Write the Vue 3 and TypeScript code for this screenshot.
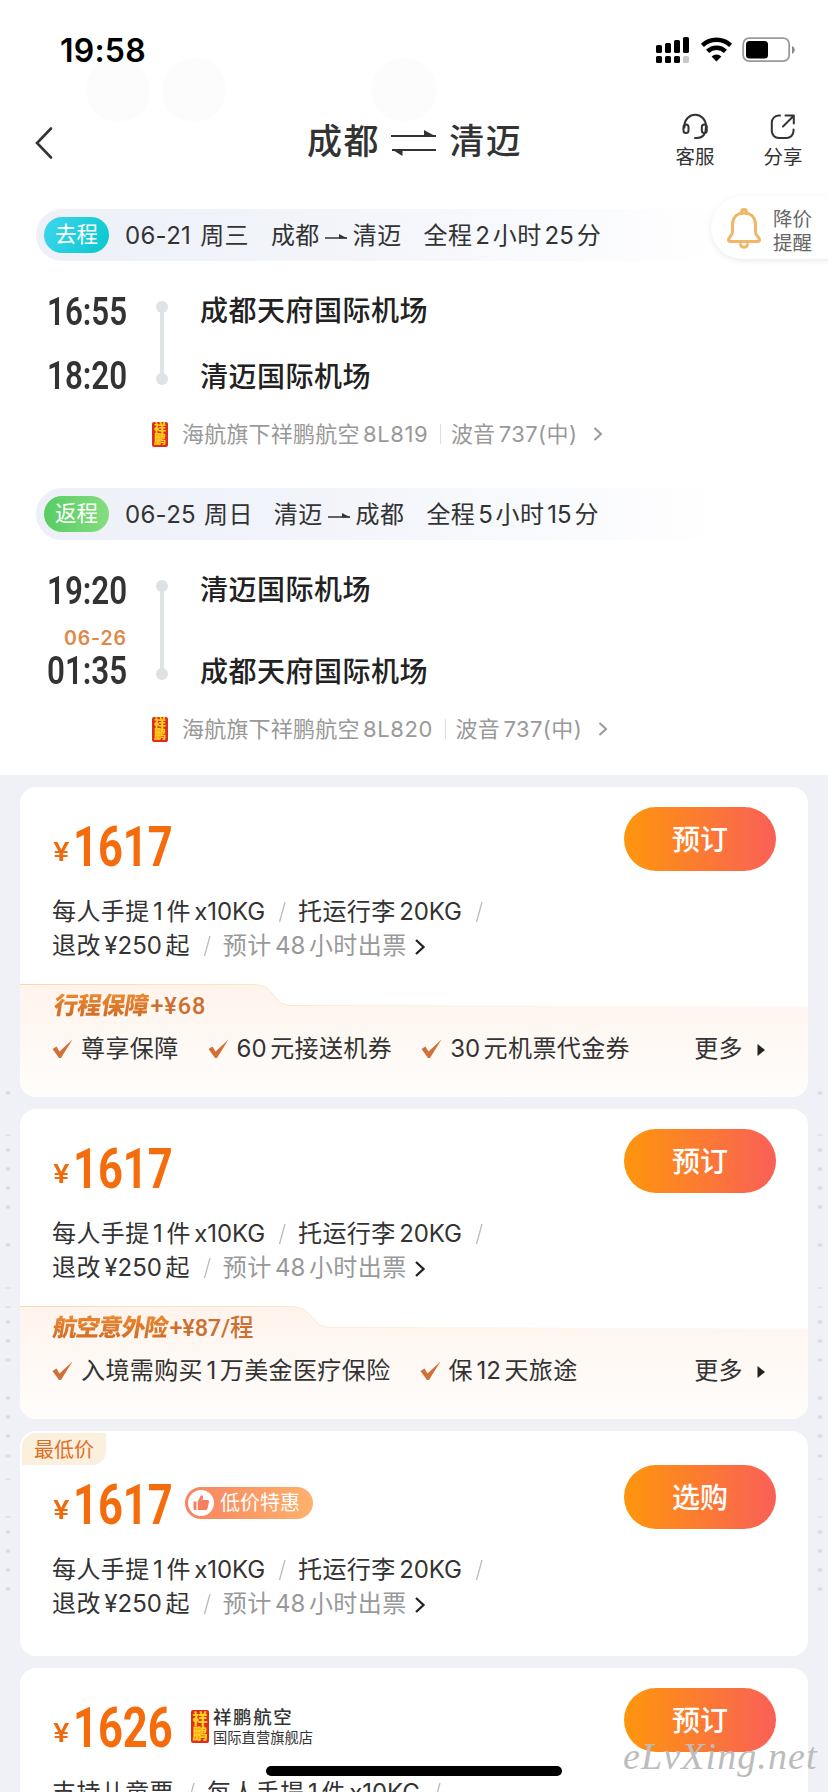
<script setup lang="ts">
interface Leg {
  kind: string
  tone: string
  date: string
  day: string
  from: string
  to: string
  duration: string
  depart: string
  arrive: string
  nextDay?: string
  fromAirport: string
  toAirport: string
  flight: string
}
interface Bundle {
  title: string
  tone: string
  extra: string
  shape: string
  edge: string
  perks: string[]
}
interface Offer {
  id: number
  price: string
  action: string
  first: string[]
  second?: string[]
  lowest?: boolean
  store?: boolean
  bundle?: Bundle
}

const legs: Leg[] = [
  { kind: '去程', tone: 'outbound', date: '06-21', day: '周三', from: '成都', to: '清迈', duration: '全程2小时25分', depart: '16:55', arrive: '18:20', fromAirport: '成都天府国际机场', toAirport: '清迈国际机场', flight: '8L819' },
  { kind: '返程', tone: 'inbound', date: '06-25', day: '周日', from: '清迈', to: '成都', duration: '全程5小时15分', depart: '19:20', arrive: '01:35', nextDay: '06-26', fromAirport: '清迈国际机场', toAirport: '成都天府国际机场', flight: '8L820' },
]

const baggage = ['每人手提1件x10KG', '托运行李20KG']
const offers: Offer[] = [
  {
    id: 1, price: '1617', action: '预订', first: baggage, second: ['退改¥250起', '预计48小时出票'],
    bundle: {
      title: '行程保障', tone: 'trip', extra: '+¥68',
      shape: 'M0 .5H232C258 .5 250 21.5 272 21.5L788 22.5V113H0Z',
      edge: 'M0 .5H232C258 .5 250 21.5 272 21.5L788 22.5',
      perks: ['尊享保障', '60元接送机券', '30元机票代金券'],
    },
  },
  {
    id: 2, price: '1617', action: '预订', first: baggage, second: ['退改¥250起', '预计48小时出票'],
    bundle: {
      title: '航空意外险', tone: 'accident', extra: '+¥87/程',
      shape: 'M0 .5H270C296 .5 288 21.5 312 21.5L788 22.5V113H0Z',
      edge: 'M0 .5H270C296 .5 288 21.5 312 21.5L788 22.5',
      perks: ['入境需购买1万美金医疗保险', '保12天旅途'],
    },
  },
  { id: 3, price: '1617', action: '选购', first: baggage, second: ['退改¥250起', '预计48小时出票'], lowest: true },
  { id: 4, price: '1626', action: '预订', first: ['支持儿童票', '每人手提1件x10KG'], store: true },
]

/** Splits a label into Chinese and Latin runs so the Latin ones can be spaced and sized apart. */
function runs(text: string): { t: string; latin: boolean }[] {
  return (text.match(/[\u4e00-\u9fff]+|[^\u4e00-\u9fff]+/g) ?? []).map((t) => ({ t, latin: !/[\u4e00-\u9fff]/.test(t) }))
}

const specks: { y: number; dash?: boolean }[] = [
  { y: 1093 }, { y: 1135, dash: true }, { y: 1150 }, { y: 1169 }, { y: 1188 }, { y: 1207 }, { y: 1245 },
  { y: 1288, dash: true }, { y: 1307, dash: true }, { y: 1322 }, { y: 1341 }, { y: 1360 }, { y: 1398 },
  { y: 1417 }, { y: 1436 }, { y: 1456 }, { y: 1479, dash: true }, { y: 1517, dash: true },
  { y: 1532 }, { y: 1551 }, { y: 1570 }, { y: 1589 },
]
</script>

<template>
  <div class="screen">
    <div class="bubbles"><i class="b1"></i><i class="b2"></i><i class="b3"></i></div>

    <header class="status">
      <span class="clock">19:58</span>
      <svg class="status-icons" width="140" height="27" viewBox="0 0 140 27">
        <g fill="#000">
          <rect x="0" y="8" width="6" height="8" rx="1.6" /><rect x="9" y="6" width="6" height="10" rx="1.6" />
          <rect x="18" y="3" width="6" height="13" rx="1.6" /><rect x="27" y="0" width="6" height="16" rx="1.6" />
          <rect x="0" y="19" width="6" height="7" rx="1.6" /><rect x="9" y="19" width="6" height="7" rx="1.6" />
          <rect x="18" y="19" width="6" height="7" rx="1.6" /><rect x="27" y="19" width="6" height="7" rx="1.6" fill="#c8c8c8" />
        </g>
        <g fill="none" stroke="#000" stroke-width="4.4">
          <path d="M46.4 8.3A20.5 20.5 0 0 1 74.6 8.3" /><path d="M51.6 14.4A12.6 12.6 0 0 1 69.4 14.4" />
        </g>
        <path d="M55.6 19.4a7 7 0 0 1 9.8 0L60.5 24.4Z" fill="#000" />
        <rect x="87.2" y="1.2" width="46" height="23" rx="6" fill="none" stroke="#999" stroke-width="1.8" />
        <rect x="90" y="4" width="22" height="17.5" rx="3.5" fill="#000" />
        <path d="M136 9c3.6 1.2 3.6 6.6 0 7.8Z" fill="#888" />
      </svg>
    </header>

    <nav class="nav">
      <svg class="chevron-back" width="20" height="36" viewBox="0 0 20 36"><path d="M17 3.500L3 18L17 32.500" fill="none" stroke="#333" stroke-width="2.600" stroke-linecap="round" /></svg>
      <h1 class="route">
        <span>成都</span>
        <svg width="48" height="28" viewBox="0 0 48 28"><g fill="none" stroke="#333" stroke-width="2.200"><path d="M1 8H46" /><path d="M2 22H46" /></g><path d="M34 2L46 8.500H34Z M2 21.500H12.500V28Z" fill="#333" /></svg>
        <span>清迈</span>
      </h1>
      <div class="tools">
        <div class="tool">
          <svg width="28" height="28" viewBox="0 0 28 28" fill="none" stroke="#333" stroke-width="2" stroke-linecap="round"><path d="M3.500 14.500V12.500a10.700 10.700 0 0 1 21.400 0V14.500C25 21 22 25 16 25H14" /><rect x="2.500" y="11.500" width="5" height="8.500" rx="2.500" /><rect x="20.800" y="11.500" width="5" height="8.500" rx="2.500" /></svg>
          <span>客服</span>
        </div>
        <div class="tool">
          <svg width="28" height="28" viewBox="0 0 28 28" fill="none" stroke="#333" stroke-width="2" stroke-linecap="round" stroke-linejoin="round"><path d="M11 2.500H9.500A7 7 0 0 0 2.800 9.500V18A7 7 0 0 0 9.800 25H17.500A7 7 0 0 0 24.500 18V16.500" /><path d="M14 13.500L24.500 3M16.500 2.500H24.800V10.500" /></svg>
          <span>分享</span>
        </div>
      </div>
    </nav>

    <aside class="alert">
      <svg width="36" height="42" viewBox="0 0 36 42" fill="none" stroke="#f0b767" stroke-width="3" stroke-linejoin="round" stroke-linecap="round"><path d="M18 5C10.500 5 6.500 10 6.500 16.500V24C6.500 28 2.500 29 2.500 32C2.500 33 3.500 33.500 4.500 33.500H31.500C32.500 33.500 33.500 33 33.500 32C33.500 29 29.500 28 29.500 24V16.500C29.500 10 25.500 5 18 5Z" /><path d="M15.500 5.500V4a2.500 2.500 0 0 1 5 0v1.500" /><path d="M14.500 36.500a3.600 3.600 0 0 0 7 0" /></svg>
      <div class="alert-text"><span>降价</span><span>提醒</span></div>
    </aside>

    <section v-for="leg in legs" :key="leg.kind" class="leg" :class="leg.tone">
      <div class="bar">
        <span class="tag">{{ leg.kind }}</span>
        <span class="date">{{ leg.date }}</span>
        <span class="day">{{ leg.day }}</span>
        <span>{{ leg.from }}</span>
        <svg class="to" width="24" height="12" viewBox="0 0 24 12"><path d="M1 8H23" stroke="#333" stroke-width="1.500" /><path d="M15 4L23.500 8.500H15Z" fill="#333" /></svg>
        <span>{{ leg.to }}</span>
        <span class="duration"><span v-for="(r, i) in runs(leg.duration)" :key="i" :class="{ lat: r.latin }">{{ r.t }}</span></span>
      </div>
      <div class="stops">
        <div class="times">
          <span class="time"><b>{{ leg.depart }}</b></span>
          <span v-if="leg.nextDay" class="next">{{ leg.nextDay }}</span>
          <span class="time"><b>{{ leg.arrive }}</b></span>
        </div>
        <div class="track"></div>
        <div class="airports"><span>{{ leg.fromAirport }}</span><span>{{ leg.toAirport }}</span></div>
      </div>
      <div class="carrier">
        <span class="seal"><i>祥</i><i>鹏</i></span>
        <span class="airline">海航旗下祥鹏航空</span>
        <span class="lat no">{{ leg.flight }}</span>
        <i class="split"></i>
        <span>波音</span><span class="lat plane">737(中)</span>
        <svg width="10" height="16" viewBox="0 0 10 16"><path d="M1.500 2L8 8L1.500 14" fill="none" stroke="#999" stroke-width="2" /></svg>
      </div>
    </section>

    <main class="offers">
      <article v-for="o in offers" :key="o.id" class="card" :class="{ lowest: o.lowest }">
        <span v-if="o.lowest" class="corner">最低价</span>
        <div class="head">
          <span class="yen">¥</span>
          <span class="price"><b>{{ o.price }}</b></span>
          <span v-if="o.lowest" class="deal">
            <svg width="26" height="26" viewBox="0 0 26 26"><circle cx="13" cy="13" r="13" fill="#fff" /><path d="M5.500 11.500H8.500V20H7Q5.500 20 5.500 18.500Z M9.800 11.500L12.500 6Q13 5 14.200 5.500Q15.500 6.200 15 8L14.500 10H19.500Q21.500 10.200 21 12L19.500 18.500Q19 20 17.500 20H9.800Z" fill="#f77e5e" /></svg>
            低价特惠
          </span>
          <span v-if="o.store" class="store">
            <span class="seal big"><i>祥</i><i>鹏</i></span>
            <span class="store-name"><em>祥鹏航空</em><small>国际直营旗舰店</small></span>
          </span>
          <button class="action">{{ o.action }}</button>
        </div>
        <div class="terms">
          <p>
            <template v-for="(part, i) in o.first" :key="i">
              <span><span v-for="(r, k) in runs(part)" :key="k" :class="{ lat: r.latin }">{{ r.t }}</span></span>
              <svg class="slash" width="8" height="22" viewBox="0 0 8 22"><path d="M7 1L1.500 21" stroke="#bbb" stroke-width="1.300" /></svg>
            </template>
          </p>
          <p v-if="o.second">
            <span><span v-for="(r, k) in runs(o.second[0])" :key="k" :class="{ lat: r.latin }">{{ r.t }}</span></span>
            <svg class="slash" width="8" height="22" viewBox="0 0 8 22"><path d="M7 1L1.500 21" stroke="#bbb" stroke-width="1.300" /></svg>
            <span class="muted"><span v-for="(r, k) in runs(o.second[1])" :key="k" :class="{ lat: r.latin }">{{ r.t }}</span></span>
            <svg class="more-arrow" width="12" height="18" viewBox="0 0 12 18"><path d="M2 2L9.500 9L2 16" fill="none" stroke="#222" stroke-width="2.300" /></svg>
          </p>
        </div>
        <div v-if="o.bundle" class="bundle" :class="o.bundle.tone">
          <svg class="bundle-bg" width="788" height="113" viewBox="0 0 788 113">
            <defs>
              <linearGradient :id="'fill' + o.id" x1="0" y1="0" x2="0" y2="1"><stop offset="0" stop-color="#fff4ec" /><stop offset=".45" stop-color="#fef8f3" /><stop offset="1" stop-color="#fffdfc" /></linearGradient>
              <linearGradient :id="'edge' + o.id" gradientUnits="userSpaceOnUse" x1="0" y1="0" x2="600" y2="0"><stop offset="0" stop-color="#f9d9ae" /><stop offset="1" stop-color="#f9d9ae" stop-opacity="0" /></linearGradient>
            </defs>
            <path :d="o.bundle.shape" :fill="`url(#fill${o.id})`" />
            <path :d="o.bundle.edge" fill="none" :stroke="`url(#edge${o.id})`" stroke-width="1" />
          </svg>
          <div class="bundle-title"><strong>{{ o.bundle.title }}</strong><span><b>{{ o.bundle.extra }}</b></span></div>
          <div class="perks">
            <span v-for="p in o.bundle.perks" :key="p" class="perk">
              <svg width="21" height="20" viewBox="0 0 21 20"><path d="M.5 10L4.500 7.500L7.500 12.500L20.500 .5L9 19H7Z" fill="#d0713a" /></svg>
              <span class="perk-text"><span v-for="(r, k) in runs(p)" :key="k" :class="{ lat: r.latin }">{{ r.t }}</span></span>
            </span>
            <span class="all">更多<svg width="8" height="12" viewBox="0 0 8 12"><path d="M.5 0L8 6L.5 12Z" fill="#222" /></svg></span>
          </div>
        </div>
      </article>
    </main>

    <svg class="specks" width="828" height="1792" viewBox="0 0 828 1792">
      <g v-for="s in specks" :key="s.y" stroke="#d5d7dd" stroke-width="1">
        <template v-for="x in [8, 820]" :key="x">
          <path v-if="s.dash" :d="`M${x - 2.5} ${s.y}h5`" />
          <path v-else :d="`M${x - 2.5} ${s.y}h5M${x - 1.5} ${s.y - 2}l3 4M${x + 1.5} ${s.y - 2}l-3 4`" />
        </template>
      </g>
    </svg>
    <div class="home"></div>
    <div class="mark">eLvXing.net</div>
  </div>
</template>

<style>
html, body { margin: 0; background: #fff; overflow: hidden; }
</style>

<style scoped>
.screen {
  position: relative;
  width: 828px;
  height: 1792px;
  overflow: hidden;
  background: #fff;
  color: #333;
  font-family: Inter, "Noto Sans CJK SC", sans-serif;
  font-size: 24px;
  line-height: 32px;
}
.screen * { box-sizing: border-box; }
i, em { font-style: normal; }
svg { display: block; flex: none; }
span { white-space: nowrap; }
.bubbles i { position: absolute; top: 58px; width: 64px; height: 64px; border-radius: 50%; background: #fcfcfc; }
.b1 { left: 86px; }
.b2 { left: 162px; }
.b3 { left: 372px; }

.status { position: relative; height: 99px; padding: 37px 33px 0 60px; display: flex; align-items: flex-start; justify-content: space-between; }
.clock { font-size: 32px; line-height: 27px; font-weight: 600; color: #000; letter-spacing: .2px; }
.status-icons { margin-right: -1px; }

.nav { position: relative; height: 110px; display: grid; grid-template-columns: 307px 1fr 152px; align-items: start; }
.chevron-back { margin: 26px 0 0 34px; }
.route { display: flex; align-items: center; height: 84px; margin: 0; font-size: 35px; font-weight: 500; letter-spacing: 1.6px; }
.route span { line-height: 40px; }
.route svg { margin: 2px 11px 0 10px; }
.tools { display: flex; gap: 50px; padding-top: 14px; }
.tool { display: flex; flex-direction: column; align-items: center; width: 38px; font-size: 19.5px; line-height: 28px; gap: 2px; }

.alert { position: absolute; z-index: 2; left: 711px; top: 196px; width: 130px; height: 63px; padding-left: 15px; display: flex; align-items: center; border-radius: 32px 0 0 32px; background: #fff; box-shadow: 0 2px 6px rgba(0, 0, 0, .08); }
.alert svg { margin-top: 2px; }
.alert-text { display: flex; flex-direction: column; margin-left: 11px; padding-top: 6px; font-size: 19.5px; line-height: 24px; color: #666; }

.leg { height: 279px; }
.leg.inbound { height: 287px; }
.lat { margin: 0 3.5px; letter-spacing: 0; }
.bar { display: flex; align-items: center; width: 690px; height: 52px; margin-left: 36px; padding: 2px 0 0 8px; border-radius: 26px 0 0 26px; background: linear-gradient(90deg, #eef0f8, #f3f5fb 45%, #fff); letter-spacing: .4px; }
.tag { width: 65px; height: 36px; margin: -2px 16px 0 0; border-radius: 18px; text-align: center; font-size: 21.5px; line-height: 35px; color: #fff; letter-spacing: 0; background: linear-gradient(120deg, #3fd5ee, #08c8cd); }
.leg.inbound .tag { background: linear-gradient(90deg, #57cd63, #84dd80); }
.date { letter-spacing: .3px; }
.day { margin: 0 22px 0 9px; }
.leg.inbound .day { margin: 0 21px 0 8px; }
.to { margin: 0 5px 0 4px; }
.duration { margin-left: 22px; }
.duration .lat { margin: 0 2.9px; }

.stops { display: grid; grid-template-columns: 47px 81px 72px 1fr; padding-top: 34px; }
.times { grid-column: 2; display: flex; flex-direction: column; height: 98px; justify-content: space-between; }
.leg.inbound .times { height: 114px; }
.time { display: block; height: 34px; line-height: 34px; }
.time b { display: inline-block; font-family: Roboto, sans-serif; font-size: 38px; font-weight: 600; transform: scaleX(.825); transform-origin: 0 50%; }
.next { align-self: flex-end; margin: 6px 1px -8px 0; font-size: 19.5px; line-height: 24px; font-weight: 600; color: #e08846; letter-spacing: .9px; }
.track { position: relative; width: 4px; height: 72px; margin: 12px 0 0 32px; background: #e0e3e4; }
.leg.inbound .track { height: 88px; }
.track::before, .track::after { content: ""; position: absolute; left: -4px; width: 12px; height: 12px; border-radius: 50%; background: #dfe2e4; }
.track::before { top: -6px; }
.track::after { bottom: -6px; }
.airports { display: flex; flex-direction: column; justify-content: space-between; height: 98px; font-size: 28px; line-height: 32px; font-weight: 500; color: #222; letter-spacing: .5px; }
.leg.inbound .airports { height: 114px; }

.carrier { display: flex; align-items: center; height: 32px; margin: 25px 0 0 152px; font-size: 22px; color: #999; letter-spacing: .2px; }
.leg.inbound .carrier { margin-top: 25px; }
.seal { display: flex; flex-direction: column; align-items: center; width: 16px; height: 25px; margin-right: 14px; padding: 1px 0; border-radius: 2px; background: #df2c1c; color: #ffd21c; font-size: 12px; line-height: 11.5px; font-weight: 900; letter-spacing: 0; }
.seal.big { width: 18px; height: 33px; margin-right: 4px; font-size: 15px; line-height: 15px; }
.no { letter-spacing: .6px; }
.split { width: 1px; height: 20px; margin: 0 10px 0 8px; background: #ddd; }
.plane { margin-right: 16px; letter-spacing: .4px; }

.offers { height: 1017px; padding: 12px 20px 0; display: flex; flex-direction: column; gap: 12px; background: #eff1f6; }
.card { position: relative; flex: none; height: 310px; border-radius: 16px; background: #fff; overflow: hidden; display: flex; flex-direction: column; }
.card.lowest { height: 225px; padding-top: 14px; }
.corner { position: absolute; left: 2px; top: 2px; width: 84px; height: 32px; padding-left: 12px; border-radius: 14px 0 14px 0; background: #fbefde; color: #dd6f25; font-size: 20px; line-height: 34px; }
.head { display: flex; align-items: flex-start; height: 108px; padding: 20px 32px 0 33px; }
.yen { width: 20px; padding-top: 29px; font-size: 26px; line-height: 32px; font-weight: 600; color: #f0690f; transform: scaleX(1.13); transform-origin: 0 50%; }
.price { width: 112px; height: 60px; padding-top: 10px; }
.price b { display: inline-block; font-family: Roboto, sans-serif; font-size: 55px; line-height: 60px; font-weight: 700; color: #f56c0d; transform: scaleX(.79); transform-origin: 0 50%; }
.deal { display: flex; align-items: center; width: 128px; height: 32px; margin-top: 22px; padding-left: 3px; gap: 6px; border-radius: 16px; background: linear-gradient(90deg, #f8835f, #ffb16c); color: #fff; font-size: 20px; }
.store { display: flex; margin: 22px 0 0 6px; }
.store-name { display: flex; flex-direction: column; }
.store-name em { margin-top: -3px; font-size: 18.5px; line-height: 20px; font-weight: 500; letter-spacing: 1.6px; }
.store-name small { font-size: 14.3px; line-height: 22px; }
.action { width: 152px; height: 64px; margin-left: auto; padding: 0 0 2px; border: 0; border-radius: 32px; background: linear-gradient(90deg, #ff960c, #f96057); color: #fff; font: 500 28px Inter, "Noto Sans CJK SC", sans-serif; }

.terms p { display: flex; align-items: center; height: 34px; margin: 0; padding-left: 32px; letter-spacing: .4px; }
.terms .lat:last-child { margin-right: 0; letter-spacing: -.1px; }
.slash { margin: 0 12px 0 13px; }
.muted { color: #999; }
.more-arrow { margin: 2px 0 0 7px; }

.bundle { position: relative; height: 113px; margin-top: auto; }
.bundle-bg { position: absolute; left: 0; top: 0; }
.bundle-title { position: relative; display: flex; align-items: center; height: 43px; padding-left: 34px; }
.bundle-title strong { font-size: 24px; font-weight: 900; letter-spacing: -.4px; color: transparent; background: linear-gradient(180deg, #ee8d34, #cb6622); -webkit-background-clip: text; background-clip: text; transform: skewX(-9deg); }
.bundle-title b { display: inline-block; margin-left: 2px; font-family: Roboto, "Noto Sans CJK SC", sans-serif; font-size: 23.5px; font-weight: 500; color: #cd6f31; letter-spacing: -.2px; }
.trip b { letter-spacing: .9px; }
.accident .bundle-title { padding-left: 33px; }
.accident strong { letter-spacing: -1.1px; }
.perks { position: relative; display: flex; align-items: center; height: 44px; padding: 0 43px 0 32px; letter-spacing: .4px; }
.perk { display: flex; align-items: center; margin-right: 29px; }
.perk svg { margin-right: 8px; }
.perk-text > .lat:first-child { margin-left: 0; }
.all { display: flex; align-items: center; margin-left: auto; }
.all svg { margin: 2px 0 0 14px; }

.specks { position: absolute; left: 0; top: 0; pointer-events: none; }
.home { position: absolute; left: 266px; top: 1766px; width: 296px; height: 10px; border-radius: 5px; background: #000; }
.mark { position: absolute; left: 623px; top: 1734px; font-family: "Liberation Serif", serif; font-style: italic; font-weight: 400; font-size: 38px; line-height: 44px; letter-spacing: 1.1px; color: #bcbcbc; }
</style>
